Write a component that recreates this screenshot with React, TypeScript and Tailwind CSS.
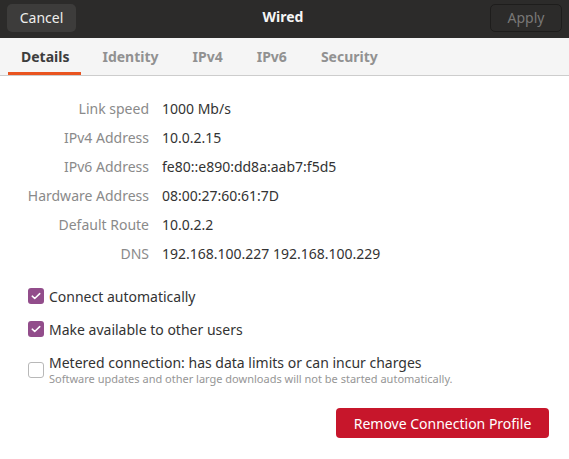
import * as React from "react";

const rows: [string, string][] = [
  ["Link speed", "1000 Mb/s"],
  ["IPv4 Address", "10.0.2.15"],
  ["IPv6 Address", "fe80::e890:dd8a:aab7:f5d5"],
  ["Hardware Address", "08:00:27:60:61:7D"],
  ["Default Route", "10.0.2.2"],
  ["DNS", "192.168.100.227 192.168.100.229"],
];

const tabs = ["Details", "Identity", "IPv4", "IPv6", "Security"];

function Check({ checked }: { checked: boolean }) {
  if (!checked) {
    return <span className="h-[16px] w-[16px] shrink-0 rounded-[3px] border border-[#b8b8b8] bg-white" />;
  }
  return (
    <span className="flex h-[16px] w-[16px] shrink-0 items-center justify-center rounded-[3px] bg-[#924d8b]">
      <svg viewBox="0 0 16 16" className="h-[12px] w-[12px]" fill="none">
        <path d="M3 8.2l3.3 3.2L13 4.8" stroke="white" strokeWidth="2" strokeLinecap="round" strokeLinejoin="round" />
      </svg>
    </span>
  );
}

export default function App() {
  return (
    <div className="flex h-[459px] w-[569px] flex-col bg-white text-[14px] text-[#3d3d3d]" style={{ fontFamily: '"Noto Sans", "Open Sans", sans-serif' }}>
      <div className="flex h-[38px] items-start justify-between bg-[#2c2b2a] px-[7px] pt-[4px]">
        <button className="h-[28px] w-[69px] rounded-[5px] bg-[#3d3c3b] leading-[26px] text-[14px] text-[#eeeeec]">Cancel</button>
        <span className="text-[14px] font-bold leading-[26px] text-[#f5f5f5]">Wired</span>
        <button className="h-[28px] w-[72px] rounded-[5px] border border-[#1e1d1c] bg-[#2c2b2a] leading-[24px] text-[14px] text-[#797877]">Apply</button>
      </div>
      <div className="flex h-[38px] items-stretch border-b border-[#cdcdcd] bg-[#f5f5f5] pl-[8px]">
        {tabs.map((t, i) => (
          <div
            key={t}
            className={
              i === 0
                ? "mr-[4px] flex items-center border-b-[3px] border-[#e95420] pl-[13px] pr-[12px] pt-[3px] text-[14px] font-bold text-[#3d3d3d]"
                : "flex items-center border-b-[3px] border-transparent px-[17px] pt-[3px] text-[14px] font-bold text-[#919191]"
            }
          >
            {t}
          </div>
        ))}
      </div>
      <div className="mt-[22px] flex flex-col gap-[9px]">
        {rows.map(([k, v]) => (
          <div key={k} className="flex h-[20px] items-center">
            <span className="w-[149px] text-right text-[#8a8a8a]">{k}</span>
            <span className="ml-[13px] text-[#333333]">{v}</span>
          </div>
        ))}
      </div>
      <div className="mt-[23px] flex flex-col pl-[28px]">
        <label className="flex h-[20px] items-center gap-[5px]">
          <Check checked />
          <span className="text-[#333333]">Connect automatically</span>
        </label>
        <label className="mt-[13px] flex h-[20px] items-center gap-[5px]">
          <Check checked />
          <span className="text-[#333333]">Make available to other users</span>
        </label>
        <label className="mt-[15px] flex items-center gap-[5px]">
          <Check checked={false} />
          <span className="flex flex-col">
            <span className="leading-[18px] text-[#333333]">Metered connection: has data limits or can incur charges</span>
            <span className="text-[11px] leading-[13px] text-[#969696]">Software updates and other large downloads will not be started automatically.</span>
          </span>
        </label>
      </div>
      <div className="mt-[23px] flex justify-end pr-[20px]">
        <button className="h-[30px] w-[213px] rounded-[4px] bg-[#c7162b] text-[14px] text-white">Remove Connection Profile</button>
      </div>
    </div>
  );
}
